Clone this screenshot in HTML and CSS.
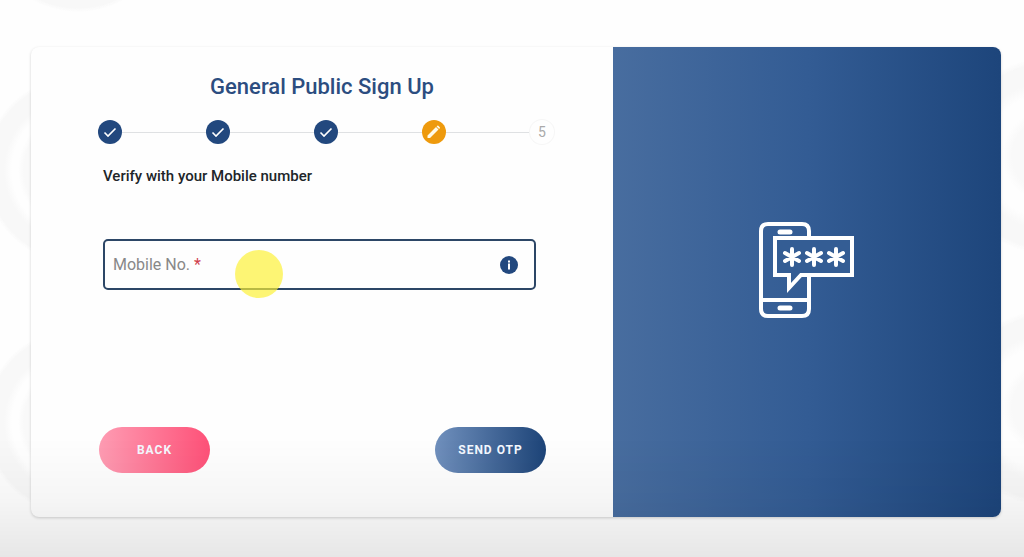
FILE: index.html
```html
<!DOCTYPE html>
<html lang="en">
<head>
    <meta charset="UTF-8">
    <meta name="viewport" content="width=device-width, initial-scale=1.0">
    <title>General Public Sign Up</title>
    <link rel="stylesheet" href="styles.css">
</head>
<body>
    <main class="card">
        <form class="signup">
            <h1>General Public Sign Up</h1>
            <ol class="steps">
                <li class="step done">
                    <svg viewBox="0 0 24 24" aria-label="Done"><path d="M6.5 12.5l3.5 3.5 7.5-7.5" fill="none" stroke="#fff" stroke-width="1.6"/></svg>
                </li>
                <li class="line"></li>
                <li class="step done">
                    <svg viewBox="0 0 24 24" aria-label="Done"><path d="M6.5 12.5l3.5 3.5 7.5-7.5" fill="none" stroke="#fff" stroke-width="1.6"/></svg>
                </li>
                <li class="line"></li>
                <li class="step done">
                    <svg viewBox="0 0 24 24" aria-label="Done"><path d="M6.5 12.5l3.5 3.5 7.5-7.5" fill="none" stroke="#fff" stroke-width="1.6"/></svg>
                </li>
                <li class="line"></li>
                <li class="step editing">
                    <svg viewBox="0 0 24 24" aria-label="Current step"><path d="M5.500 18v-2.500l8.500-8.500 2.500 2.500-8.500 8.500zM14.600 6.400l.7-.7q.5-.4 1 0l1.500 1.500q.4.5 0 1l-.7.7z" fill="#fffbe8"/></svg>
                </li>
                <li class="line"></li>
                <li class="step">5</li>
            </ol>
            <h2>Verify with your Mobile number</h2>

            <div class="field">
                <label for="mobile">Mobile No. <span class="required">*</span></label>
                <input type="tel" id="mobile" name="mobile" required>
                <svg class="info" viewBox="0 0 18 18" aria-hidden="true">
                    <circle cx="9" cy="9" r="9" fill="#22487e"/>
                    <path d="M8 4.500h2v2H8zM8 7.500h2v6H8z" fill="#fff"/>
                </svg>
                <span class="pointer"></span>
            </div>

            <div class="actions">
                <button type="button" class="btn back">Back</button>
                <button type="submit" class="btn send">Send OTP</button>
            </div>
        </form>

        <aside class="side">
            <!-- phone with a one-time code bubble -->
            <svg class="otp" viewBox="0 0 96 96" fill="none" stroke="#fff" stroke-width="4" stroke-linecap="round">
                <path d="M50 14V9q0-7-7-7H9Q2 2 2 9v78q0 7 7 7h34q7 0 7-7V34M2 78h48"/>
                <path d="M21 10h10M21 86h10" stroke-width="5"/>
                <path d="M16 16h77v37H42L30 66V53H16z" fill="#345d94"/>
                <path d="M33 27v16M26 31l14 8M26 39l14-8M55 27v16M48 31l14 8M48 39l14-8M77 27v16M70 31l14 8M70 39l14-8"/>
            </svg>
        </aside>
    </main>
</body>
</html>
```

FILE: styles.css
```css
* { box-sizing: border-box; }

body {
    margin: 0;
    padding: 47px 0 40px;
    min-height: 100vh;
    font-family: Roboto, Arial, sans-serif;
    color: #212529;
    background-color: #fefefe;
    /* faint wheels down both sides */
    background-image:
        radial-gradient(circle, #fefefe 32px, #f9f9f9 40px, #f9f9f9 54px, #fefefe 60px, #fefefe 66px, #f8f8f8 74px, #f8f8f8 90px, transparent 94px),
        radial-gradient(circle, #f9f9f9 36px, #fefefe 46px, #fefefe 62px, #f8f8f8 74px, #f8f8f8 92px, transparent 98px);
    background-size: 190px 252px;
    background-repeat: repeat-y;
    background-position: left -17px top 44px, right -119px top 30px;
}

/* page gets darker towards the bottom */
body::after {
    content: "";
    position: fixed;
    left: 0;
    right: 0;
    bottom: 0;
    height: 120px;
    background: linear-gradient(rgba(0,0,0,0), rgba(0,0,0,0.03) 50%, rgba(0,0,0,0.09));
    pointer-events: none;
}

.card {
    display: grid;
    grid-template-columns: 3fr 2fr;
    margin: 0 23px 0 31px;
    border-radius: 8px;
    overflow: hidden;
    background: #fefefe;
    box-shadow: 0 1px 3px rgba(0,0,0,0.18);
}

.signup { padding: 26px 59px 44px 67px; }

h1 {
    margin: 0 8px 20px 0;
    font-size: 22px;
    line-height: 27px;
    font-weight: 500;
    text-align: center;
    color: #2c4d80;
}

.steps {
    display: flex;
    align-items: center;
    margin: 0 0 20px;
    padding: 0;
    list-style: none;
}

.step {
    width: 24px;
    height: 24px;
    border-radius: 50%;
    box-shadow: 0 0 0 1px #f6f6f6;
    font-size: 14px;
    line-height: 24px;
    text-align: center;
    color: #aaa;
}
.step svg { display: block; width: 24px; height: 24px; }
.done { background: #22487e; box-shadow: none; }
.editing { background: #ee9a0d; box-shadow: none; }
.line { flex: 1; height: 1px; background: #dfe1e3; }

h2 {
    margin: 0 5px 51px;
    font-size: 15px;
    line-height: 24px;
    font-weight: 500;
}

.field {
    position: relative;
    display: flex;
    align-items: center;
    height: 51px;
    margin: 0 18px 137px 5px;
    padding: 0 16px 0 8px;
    border: 2px solid #2c4666;
    border-radius: 5px;
}
.field label { color: #888; font-size: 16px; line-height: 20px; }
.required { color: #d0404c; }
.field input {
    flex: 1;
    min-width: 0;
    height: 100%;
    border: 0;
    outline: 0;
    background: transparent;
    font: inherit;
}
.info { width: 18px; height: 18px; }

/* click highlight over the field */
.pointer {
    position: absolute;
    left: 130px;
    top: 9px;
    width: 48px;
    height: 48px;
    border-radius: 50%;
    background: rgba(252,240,50,0.68);
    pointer-events: none;
}

.actions { display: flex; justify-content: space-between; margin: 0 8px 0 1px; }

.btn {
    width: 111px;
    height: 46px;
    border: 0;
    border-radius: 23px;
    font-family: inherit;
    font-size: 12px;
    font-weight: 700;
    letter-spacing: 1px;
    text-transform: uppercase;
    color: #f4f8ff;
    cursor: pointer;
}
.back { background: linear-gradient(to right, #fe9cb3, #fe5178); }
.send { background: linear-gradient(to right, #7090bd, #1d4478); }

.side {
    display: flex;
    align-items: center;
    justify-content: center;
    background: linear-gradient(to right, #486d9f, #335c94 50%, #1d457b);
}
.otp { width: 96px; height: 96px; margin-bottom: 24px; }
```
